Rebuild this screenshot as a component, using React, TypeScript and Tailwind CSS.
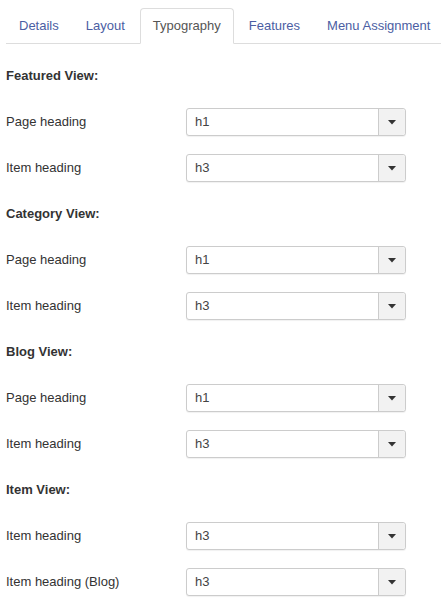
import React from "react";

type Item = { kind: "heading"; text: string } | { kind: "row"; label: string; value: string };

const items: Item[] = [
  { kind: "heading", text: "Featured View:" },
  { kind: "row", label: "Page heading", value: "h1" },
  { kind: "row", label: "Item heading", value: "h3" },
  { kind: "heading", text: "Category View:" },
  { kind: "row", label: "Page heading", value: "h1" },
  { kind: "row", label: "Item heading", value: "h3" },
  { kind: "heading", text: "Blog View:" },
  { kind: "row", label: "Page heading", value: "h1" },
  { kind: "row", label: "Item heading", value: "h3" },
  { kind: "heading", text: "Item View:" },
  { kind: "row", label: "Item heading", value: "h3" },
  { kind: "row", label: "Item heading (Blog)", value: "h3" },
];

const tabs = ["Details", "Layout", "Typography", "Features", "Menu Assignment"];

function Select({ value }: { value: string }) {
  return (
    <div className="flex h-[28px] w-[220px] items-stretch rounded-[3px] border border-[#cccccc] bg-white shadow-[0_1px_1px_rgba(0,0,0,0.06)]">
      <div className="flex flex-1 items-center pl-[8px] text-[13px] text-[#444444]">{value}</div>
      <div className="flex w-[27px] items-center justify-center rounded-r-[3px] border-l border-[#cccccc] bg-[#f2f2f2]">
        <svg width="8" height="5" viewBox="0 0 8 5">
          <path d="M0 0 L8 0 L4 4.5 Z" fill="#333333" />
        </svg>
      </div>
    </div>
  );
}

export default function App() {
  return (
    <div
      className="w-[441px] h-[603px] overflow-hidden bg-white pl-[6px] text-[13px] text-[#333333]"
      style={{ fontFamily: '"Liberation Sans", Arial, sans-serif' }}
    >
      <div className="flex h-[44px] items-end border-b border-[#dddddd] pt-[8px] whitespace-nowrap">
        {tabs.map((t) => {
          const active = t === "Typography";
          return (
            <div
              key={t}
              className={
                active
                  ? "ml-[1px] mr-[2px] -mb-px flex h-[36px] items-center rounded-t-[4px] border border-[#dddddd] border-b-white bg-white px-[12px] text-[#555555]"
                  : "ml-[1px] mr-[2px] flex h-[35px] items-center px-[12px] text-[#4b5ea3]"
              }
            >
              {t}
            </div>
          );
        })}
      </div>
      <div className="pt-[9px]">
        {items.map((it, i) =>
          it.kind === "heading" ? (
            <div key={i} className="flex h-[46px] items-center font-bold">
              {it.text}
            </div>
          ) : (
            <div key={i} className="flex h-[46px] items-center">
              <div className="w-[180px]">{it.label}</div>
              <Select value={it.value} />
            </div>
          )
        )}
      </div>
    </div>
  );
}
